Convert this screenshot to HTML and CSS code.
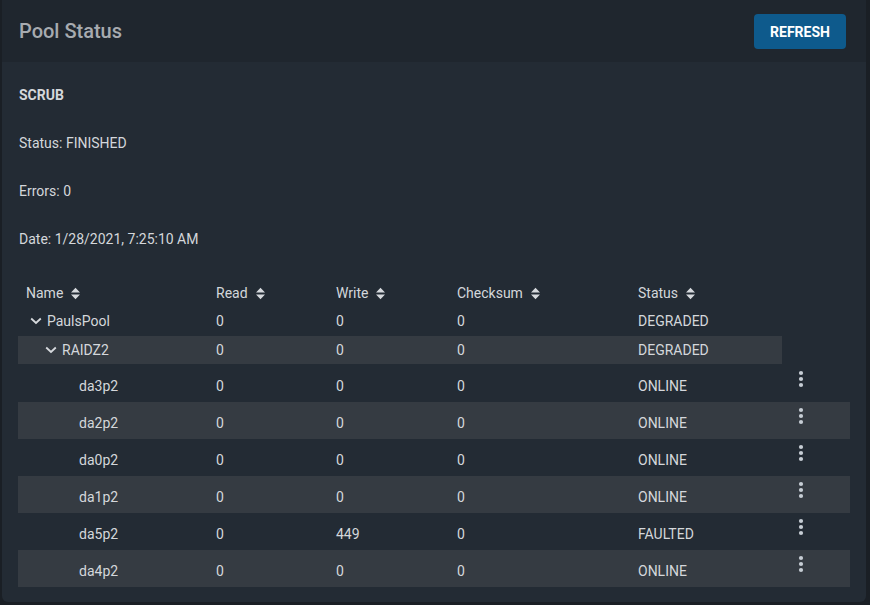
FILE: index.html
```html
<!DOCTYPE html>
<html>
<head>
<meta charset="utf-8">
<link rel="stylesheet" href="styles.css">
</head>
<body>
<div class="card">
  <div class="card-header">
    <h1 class="title">Pool Status</h1>
    <button class="btn-refresh">REFRESH</button>
  </div>
  <div class="card-body">
    <div class="info info-first"><strong>SCRUB</strong></div>
    <div class="info">Status: FINISHED</div>
    <div class="info">Errors: 0</div>
    <div class="info">Date: 1/28/2021, 7:25:10 AM</div>

    <div class="table">
      <div class="row head">
        <div class="cell c-name">Name <svg class="sort" viewBox="0 0 10 13" width="11" height="13"><path d="M0.5 5.5 L5 0.8 L9.5 5.5 Z M0.5 7.5 L5 12.2 L9.5 7.5 Z" fill="#d6d9dd"/></svg></div>
        <div class="cell">Read <svg class="sort" viewBox="0 0 10 13" width="11" height="13"><path d="M0.5 5.5 L5 0.8 L9.5 5.5 Z M0.5 7.5 L5 12.2 L9.5 7.5 Z" fill="#d6d9dd"/></svg></div>
        <div class="cell">Write <svg class="sort" viewBox="0 0 10 13" width="11" height="13"><path d="M0.5 5.5 L5 0.8 L9.5 5.5 Z M0.5 7.5 L5 12.2 L9.5 7.5 Z" fill="#d6d9dd"/></svg></div>
        <div class="cell">Checksum <svg class="sort" viewBox="0 0 10 13" width="11" height="13"><path d="M0.5 5.5 L5 0.8 L9.5 5.5 Z M0.5 7.5 L5 12.2 L9.5 7.5 Z" fill="#d6d9dd"/></svg></div>
        <div class="cell">Status <svg class="sort" viewBox="0 0 10 13" width="11" height="13"><path d="M0.5 5.5 L5 0.8 L9.5 5.5 Z M0.5 7.5 L5 12.2 L9.5 7.5 Z" fill="#d6d9dd"/></svg></div>
        <div class="cell"></div>
      </div>

      <div class="row group">
        <div class="cell c-name lvl0"><svg class="chev" viewBox="0 0 12 8" width="12" height="8"><path d="M1.2 1.5 L6 6 L10.8 1.5" fill="none" stroke="#d6d9dd" stroke-width="1.8"/></svg>PaulsPool</div>
        <div class="cell">0</div>
        <div class="cell">0</div>
        <div class="cell">0</div>
        <div class="cell">DEGRADED</div>
        <div class="cell"></div>
      </div>

      <div class="row group vdev">
        <div class="cell c-name lvl1"><svg class="chev" viewBox="0 0 12 8" width="12" height="8"><path d="M1.2 1.5 L6 6 L10.8 1.5" fill="none" stroke="#d6d9dd" stroke-width="1.8"/></svg>RAIDZ2</div>
        <div class="cell">0</div>
        <div class="cell">0</div>
        <div class="cell">0</div>
        <div class="cell">DEGRADED</div>
      </div>

      <div class="row disk">
        <div class="cell c-name leaf">da3p2</div>
        <div class="cell">0</div><div class="cell">0</div><div class="cell">0</div>
        <div class="cell">ONLINE</div>
        <div class="cell actions"><svg class="dots" viewBox="0 0 6 18" width="6" height="18"><circle cx="3" cy="3" r="2.1"/><circle cx="3" cy="9" r="2.1"/><circle cx="3" cy="15" r="2.1"/></svg></div>
      </div>
      <div class="row disk alt">
        <div class="cell c-name leaf">da2p2</div>
        <div class="cell">0</div><div class="cell">0</div><div class="cell">0</div>
        <div class="cell">ONLINE</div>
        <div class="cell actions"><svg class="dots" viewBox="0 0 6 18" width="6" height="18"><circle cx="3" cy="3" r="2.1"/><circle cx="3" cy="9" r="2.1"/><circle cx="3" cy="15" r="2.1"/></svg></div>
      </div>
      <div class="row disk">
        <div class="cell c-name leaf">da0p2</div>
        <div class="cell">0</div><div class="cell">0</div><div class="cell">0</div>
        <div class="cell">ONLINE</div>
        <div class="cell actions"><svg class="dots" viewBox="0 0 6 18" width="6" height="18"><circle cx="3" cy="3" r="2.1"/><circle cx="3" cy="9" r="2.1"/><circle cx="3" cy="15" r="2.1"/></svg></div>
      </div>
      <div class="row disk alt">
        <div class="cell c-name leaf">da1p2</div>
        <div class="cell">0</div><div class="cell">0</div><div class="cell">0</div>
        <div class="cell">ONLINE</div>
        <div class="cell actions"><svg class="dots" viewBox="0 0 6 18" width="6" height="18"><circle cx="3" cy="3" r="2.1"/><circle cx="3" cy="9" r="2.1"/><circle cx="3" cy="15" r="2.1"/></svg></div>
      </div>
      <div class="row disk">
        <div class="cell c-name leaf">da5p2</div>
        <div class="cell">0</div><div class="cell">449</div><div class="cell">0</div>
        <div class="cell">FAULTED</div>
        <div class="cell actions"><svg class="dots" viewBox="0 0 6 18" width="6" height="18"><circle cx="3" cy="3" r="2.1"/><circle cx="3" cy="9" r="2.1"/><circle cx="3" cy="15" r="2.1"/></svg></div>
      </div>
      <div class="row disk alt">
        <div class="cell c-name leaf">da4p2</div>
        <div class="cell">0</div><div class="cell">0</div><div class="cell">0</div>
        <div class="cell">ONLINE</div>
        <div class="cell actions"><svg class="dots" viewBox="0 0 6 18" width="6" height="18"><circle cx="3" cy="3" r="2.1"/><circle cx="3" cy="9" r="2.1"/><circle cx="3" cy="15" r="2.1"/></svg></div>
      </div>
    </div>
  </div>
</div>
</body>
</html>
```

FILE: styles.css
```css
html, body {
  margin: 0;
  padding: 0;
  background: #1a1f25;
  height: 605px;
  overflow: hidden;
}

body {
  font-family: Roboto, "Liberation Sans", Arial, sans-serif;
  color: #d4d7db;
  font-size: 14px;
}

.card {
  margin-left: 2px;
  width: 864px;
  height: 602px;
  background: #232b34;
  border-radius: 0 0 6px 6px;
  overflow: hidden;
  display: flex;
  flex-direction: column;
}

.card-header {
  height: 62px;
  flex: 0 0 62px;
  background: #1f262e;
  display: flex;
  align-items: center;
  justify-content: space-between;
  padding: 0 20px 0 17px;
  box-sizing: border-box;
}

.title {
  margin: 0;
  font-size: 20px;
  font-weight: 500;
  color: #a7abb0;
  letter-spacing: 0;
}

.btn-refresh {
  width: 92px;
  height: 35px;
  margin-top: 1px;
  border: none;
  border-radius: 4px;
  background: #0e5a8c;
  color: #ffffff;
  font-family: Roboto, "Liberation Sans", Arial, sans-serif;
  font-size: 14px;
  font-weight: 700;
  letter-spacing: 0;
  padding: 0;
}

.card-body {
  padding: 9px 16px 0 16px;
}

.info {
  height: 48px;
  line-height: 48px;
  padding-left: 1px;
}

.info strong {
  font-weight: 700;
  font-size: 14px;
}

.table {
  margin-top: 16px;
  display: flex;
  flex-direction: column;
}

.row {
  display: grid;
  grid-template-columns: 198px 120px 121px 181px 144px 68px;
  align-items: center;
}

.row.head {
  height: 28px;
}

.row.group {
  height: 28px;
}

.row.vdev {
  grid-template-columns: 198px 120px 121px 181px 144px;
  width: 764px;
  background: #353b42;
  margin-top: 1px;
}

.row.disk {
  height: 37px;
  align-items: start;
}

.row.disk .cell {
  padding-top: 13px;
}

.row.disk .cell.actions {
  padding-top: 5px;
  padding-left: 16px;
}

.row.alt {
  background: #353b42;
}

.row.vdev + .row.disk {
  margin-top: 1px;
}

.cell {
  line-height: 16px;
  white-space: nowrap;
  display: flex;
  align-items: center;
}

.c-name {
  padding-left: 8px;
}

.sort {
  margin-left: 7px;
}

.chev {
  margin-left: 4px;
  margin-right: 5px;
}

.lvl1 {
  padding-left: 23px;
}

.leaf {
  padding-left: 61px;
}

.dots {
  fill: #c6cdd4;
}
```
